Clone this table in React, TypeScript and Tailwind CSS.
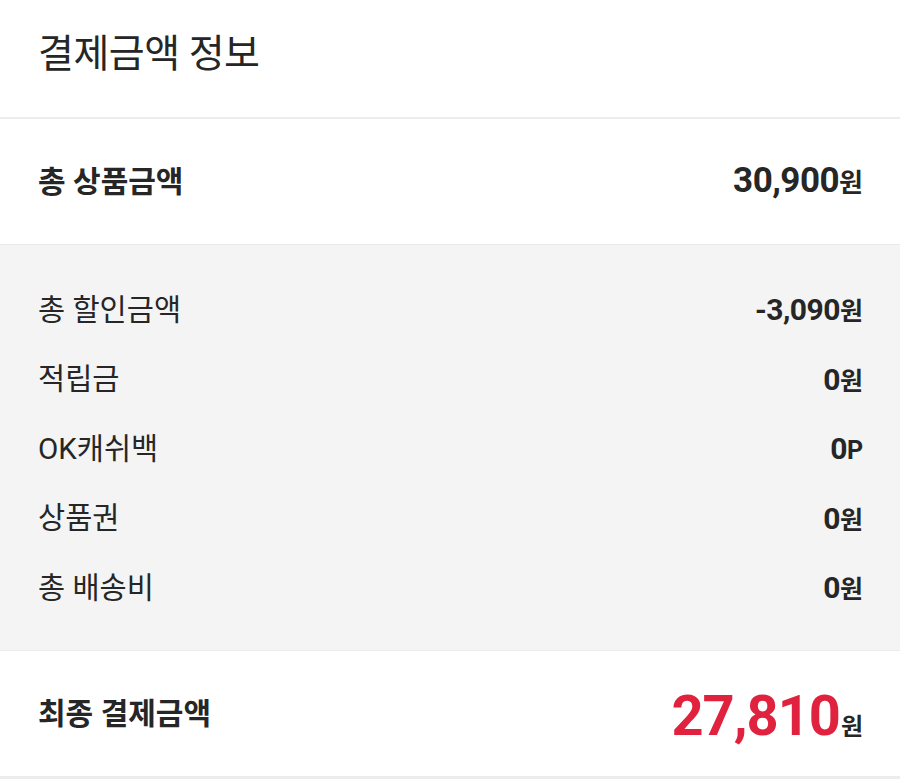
import React from "react";

const rows = [
  { label: "총 할인금액", value: "-3,090", unit: "원" },
  { label: "적립금", value: "0", unit: "원" },
  { label: "OK캐쉬백", value: "0", unit: "P" },
  { label: "상품권", value: "0", unit: "원" },
  { label: "총 배송비", value: "0", unit: "원" },
];

export default function App() {
  return (
    <div
      className="w-[900px] h-[779px] bg-white text-[#262626] overflow-hidden"
      style={{ fontFamily: "Roboto, 'Noto Sans CJK KR', sans-serif" }}
    >
      <div className="h-[119px] flex items-center pl-[38px] border-b-2 border-[#ececec]">
        <h1 className="text-[39px] font-normal tracking-[-0.5px] pb-[8px]">결제금액 정보</h1>
      </div>
      <div className="h-[125px] flex items-center justify-between pl-[38px] pr-[37px]">
        <span className="text-[30px] font-bold">총 상품금액</span>
        <span className="font-bold flex items-baseline">
          <span className="text-[35px] tracking-[-0.5px]">30,900</span>
          <span className="text-[26px]">원</span>
        </span>
      </div>
      <div className="bg-[#f4f4f4] border-t border-[#e8e8e8] pt-[30px] pb-[27px]">
        {rows.map((r) => (
          <div key={r.label} className="h-[69.5px] flex items-center justify-between pl-[38px] pr-[37px]">
            <span className="text-[29.5px]">{r.label}</span>
            <span className="font-bold flex items-baseline">
              <span className="text-[30px] tracking-[-0.5px]">{r.value}</span>
              <span className="text-[25px]">{r.unit}</span>
            </span>
          </div>
        ))}
      </div>
      <div className="h-[129px] flex items-center justify-between pl-[38px] pr-[37px] border-t border-[#ececec] border-b-[3px]">
        <span className="text-[30px] font-bold">최종 결제금액</span>
        <span className="font-bold flex items-baseline pt-[6px]">
          <span className="text-[56px] text-[#e0223f] tracking-[-1px]">27,810</span>
          <span className="text-[24px] ml-[1px]">원</span>
        </span>
      </div>
    </div>
  );
}
